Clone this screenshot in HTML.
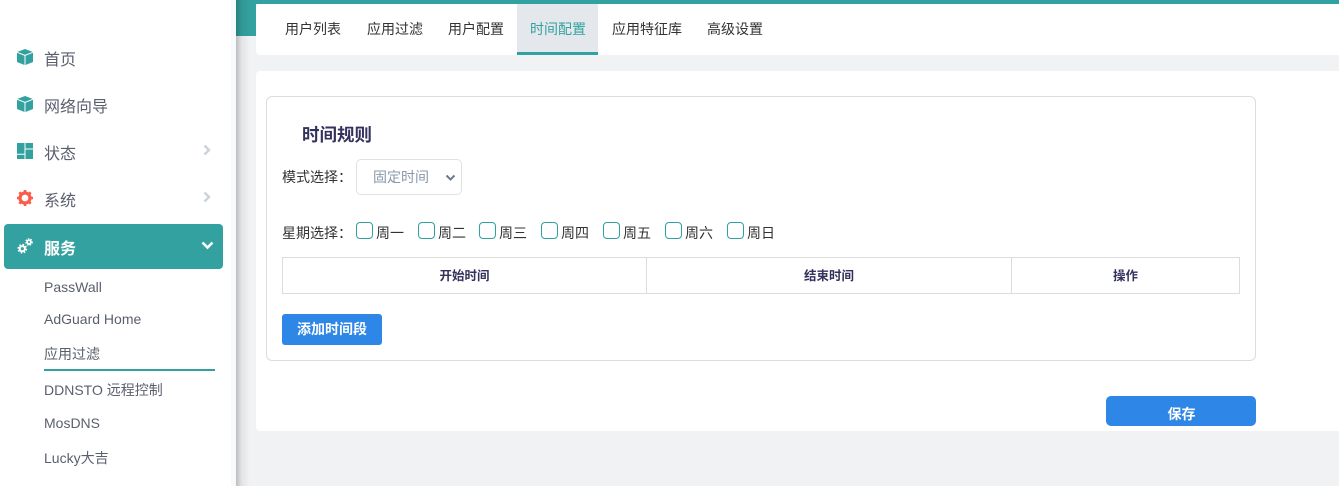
<!DOCTYPE html>
<html lang="zh">
<head>
<meta charset="utf-8">
<style>
html,body{margin:0;padding:0;width:1339px;height:486px;overflow:hidden;background:#f0f1f4;font-family:"Liberation Sans","Noto Sans CJK SC",sans-serif;color:#32325d}
*{box-sizing:border-box}
.a{position:absolute;white-space:nowrap}
#side{position:absolute;left:0;top:0;width:231px;height:486px;background:#fff}
#strip{position:absolute;left:231px;top:0;width:5px;height:486px;background:#f7f9fc}
#main{position:absolute;left:236px;top:0;width:1103px;height:486px;background:#f1f2f4;overflow:hidden}
#shadow{position:absolute;left:236px;top:0;width:14px;height:486px;background:linear-gradient(90deg,rgba(0,0,0,.22),rgba(0,0,0,.06) 40%,rgba(0,0,0,0));z-index:3}
.nav{font-size:16px;line-height:20px;color:#5a5f6e;left:44px}
.sub{font-size:14px;line-height:20px;color:#5a5f6e;left:44px}
.tab{font-size:14px;line-height:20px;color:#333;top:19px}
.lbl{font-size:14px;line-height:20px;color:#333}
.cb{position:absolute;top:222px;width:17px;height:17px;border:1px solid #2ea1a0;border-radius:4px;background:#fff}
.th{position:absolute;top:258px;height:35px;text-align:center;font-size:12.500px;font-weight:700;line-height:36px;color:#32325d}
svg{position:absolute;display:block}
</style>
</head>
<body>
<div id="side">
  <svg style="left:17px;top:49px" width="16" height="16" viewBox="0 0 16 16"><path fill="#33a19f" d="M8 0l7.600 2.900L8 5.900.4 2.900z"/><path fill="#33a19f" d="M0 3.700l7.500 3V16L0 13z"/><path fill="#33a19f" d="M16 3.700l-7.500 3V16l7.500-3z"/></svg>
  <div class="a nav" style="top:51px">首页</div>
  <svg style="left:17px;top:96px" width="16" height="16" viewBox="0 0 16 16"><path fill="#33a19f" d="M8 0l7.600 2.900L8 5.900.4 2.900z"/><path fill="#33a19f" d="M0 3.700l7.500 3V16L0 13z"/><path fill="#33a19f" d="M16 3.700l-7.500 3V16l7.500-3z"/></svg>
  <div class="a nav" style="top:98px">网络向导</div>
  <svg style="left:17px;top:143px" width="16" height="16" viewBox="0 0 16 16"><path fill="#33a19f" d="M0 0h7.500v10.800H0zM0 11.800h7.500V16H0zM8.500 0H16v5.500H8.500zM8.500 6.500H16V16H8.500z"/></svg>
  <div class="a nav" style="top:145px">状态</div>
  <svg style="left:203px;top:144px" width="8" height="12" viewBox="0 0 8 12"><path fill="none" stroke="#ccd2dc" stroke-width="2.400" d="M1.500 1.500L6 6l-4.500 4.500"/></svg>
  <svg style="left:17px;top:190px" width="16" height="16" viewBox="0 0 16 16"><circle cx="8" cy="8" r="5" fill="none" stroke="#fb5c4a" stroke-width="3.200"/><path stroke="#fb5c4a" stroke-width="2.600" d="M8 0v3M8 13v3M0 8h3M13 8h3M2.300 2.300l2.100 2.100M11.600 11.600l2.100 2.100M2.300 13.700l2.100-2.100M11.600 4.400l2.100-2.100"/></svg>
  <div class="a nav" style="top:192px">系统</div>
  <svg style="left:203px;top:191px" width="8" height="12" viewBox="0 0 8 12"><path fill="none" stroke="#ccd2dc" stroke-width="2.400" d="M1.500 1.500L6 6l-4.500 4.500"/></svg>
  <div class="a" style="left:4px;top:224px;width:219px;height:45px;background:#33a19f;border-radius:4px"></div>
  <svg style="left:17px;top:238px" width="16" height="16" viewBox="0 0 16 16"><g fill="none" stroke="#fff"><circle cx="5.300" cy="10.700" r="2.600" stroke-width="2"/><circle cx="5.300" cy="10.700" r="4.200" stroke-width="1.400" stroke-dasharray="1.700 1.600"/><circle cx="12" cy="4" r="1.900" stroke-width="1.700"/><circle cx="12" cy="4" r="3.200" stroke-width="1.200" stroke-dasharray="1.500 1.200"/></g></svg>
  <div class="a nav" style="top:240px;color:#fff;font-weight:700">服务</div>
  <svg style="left:201px;top:241px" width="13" height="9" viewBox="0 0 13 9"><path fill="none" stroke="#fff" stroke-width="2.600" d="M1.500 1.500l5 5 5-5"/></svg>
  <div class="a sub" style="top:277px">PassWall</div>
  <div class="a sub" style="top:309px">AdGuard Home</div>
  <div class="a sub" style="top:344px">应用过滤</div>
  <div class="a" style="left:44px;top:369px;width:171px;height:2px;background:#33a19f"></div>
  <div class="a sub" style="top:380px">DDNSTO 远程控制</div>
  <div class="a sub" style="top:413px">MosDNS</div>
  <div class="a sub" style="top:448px">Lucky大吉</div>
</div>
<div id="strip"></div>
<div id="main">
  <div class="a" style="left:0;top:0;width:1103px;height:4px;background:#33a19f"></div>
  <div class="a" style="left:0;top:0;width:20px;height:36px;background:#33a19f"></div>
  <div class="a" style="left:20px;top:4px;width:1083px;height:51px;background:#fff;border-radius:4px 0 0 4px"></div>
  <div class="a" style="left:20px;top:71px;width:1083px;height:360px;background:#fff;border-radius:4px 0 0 4px"></div>
</div>
<div id="shadow"></div>
<div class="a" style="left:517px;top:4px;width:81px;height:51px;background:#e4e8ec;border-bottom:3px solid #33a19f"></div>
<div class="a tab" style="left:285px">用户列表</div>
<div class="a tab" style="left:367px">应用过滤</div>
<div class="a tab" style="left:448px">用户配置</div>
<div class="a tab" style="left:530px;color:#33a19f">时间配置</div>
<div class="a tab" style="left:612px">应用特征库</div>
<div class="a tab" style="left:707px">高级设置</div>

<div class="a" style="left:266px;top:96px;width:990px;height:265px;border:1px solid #dcdcdc;border-radius:6px;background:#fff"></div>
<div class="a" style="left:302px;top:123px;font-size:17.500px;line-height:24px;font-weight:700;color:#32325d">时间规则</div>
<div class="a lbl" style="left:282px;top:167px">模式选择：</div>
<div class="a" style="left:356px;top:159px;width:106px;height:36px;border:1px solid #dee2e6;border-radius:5px;background:#fff"></div>
<div class="a" style="left:373px;top:167px;font-size:14px;line-height:20px;color:#8898aa">固定时间</div>
<svg style="left:445px;top:174px" width="11" height="8" viewBox="0 0 11 8"><path fill="none" stroke="#6c7a89" stroke-width="2" d="M1.500 1.500l4 4 4-4"/></svg>
<div class="a lbl" style="left:282px;top:223px">星期选择：</div>
<div class="cb" style="left:356px"></div><div class="a lbl" style="left:376px;top:223px">周一</div>
<div class="cb" style="left:418px"></div><div class="a lbl" style="left:438px;top:223px">周二</div>
<div class="cb" style="left:479px"></div><div class="a lbl" style="left:499px;top:223px">周三</div>
<div class="cb" style="left:541px"></div><div class="a lbl" style="left:561px;top:223px">周四</div>
<div class="cb" style="left:603px"></div><div class="a lbl" style="left:623px;top:223px">周五</div>
<div class="cb" style="left:665px"></div><div class="a lbl" style="left:685px;top:223px">周六</div>
<div class="cb" style="left:727px"></div><div class="a lbl" style="left:747px;top:223px">周日</div>

<div class="a" style="left:282px;top:257px;width:958px;height:37px;border:1px solid #dcdcdc"></div>
<div class="a" style="left:646px;top:258px;width:1px;height:35px;background:#dcdcdc"></div>
<div class="a" style="left:1011px;top:258px;width:1px;height:35px;background:#dcdcdc"></div>
<div class="th" style="left:283px;width:363px">开始时间</div>
<div class="th" style="left:647px;width:364px">结束时间</div>
<div class="th" style="left:1012px;width:227px">操作</div>

<div class="a" style="left:282px;top:314px;width:100px;height:31px;background:#2e86e6;border-radius:3px;color:#fff;font-size:14px;font-weight:700;line-height:31px;text-align:center">添加时间段</div>
<div class="a" style="left:1106px;top:396px;width:150px;height:30px;background:#2e86e6;border-radius:5px;color:#fff;font-size:14px;font-weight:700;line-height:36px;text-align:center;padding-left:1px;overflow:hidden">保存</div>
</body>
</html>
